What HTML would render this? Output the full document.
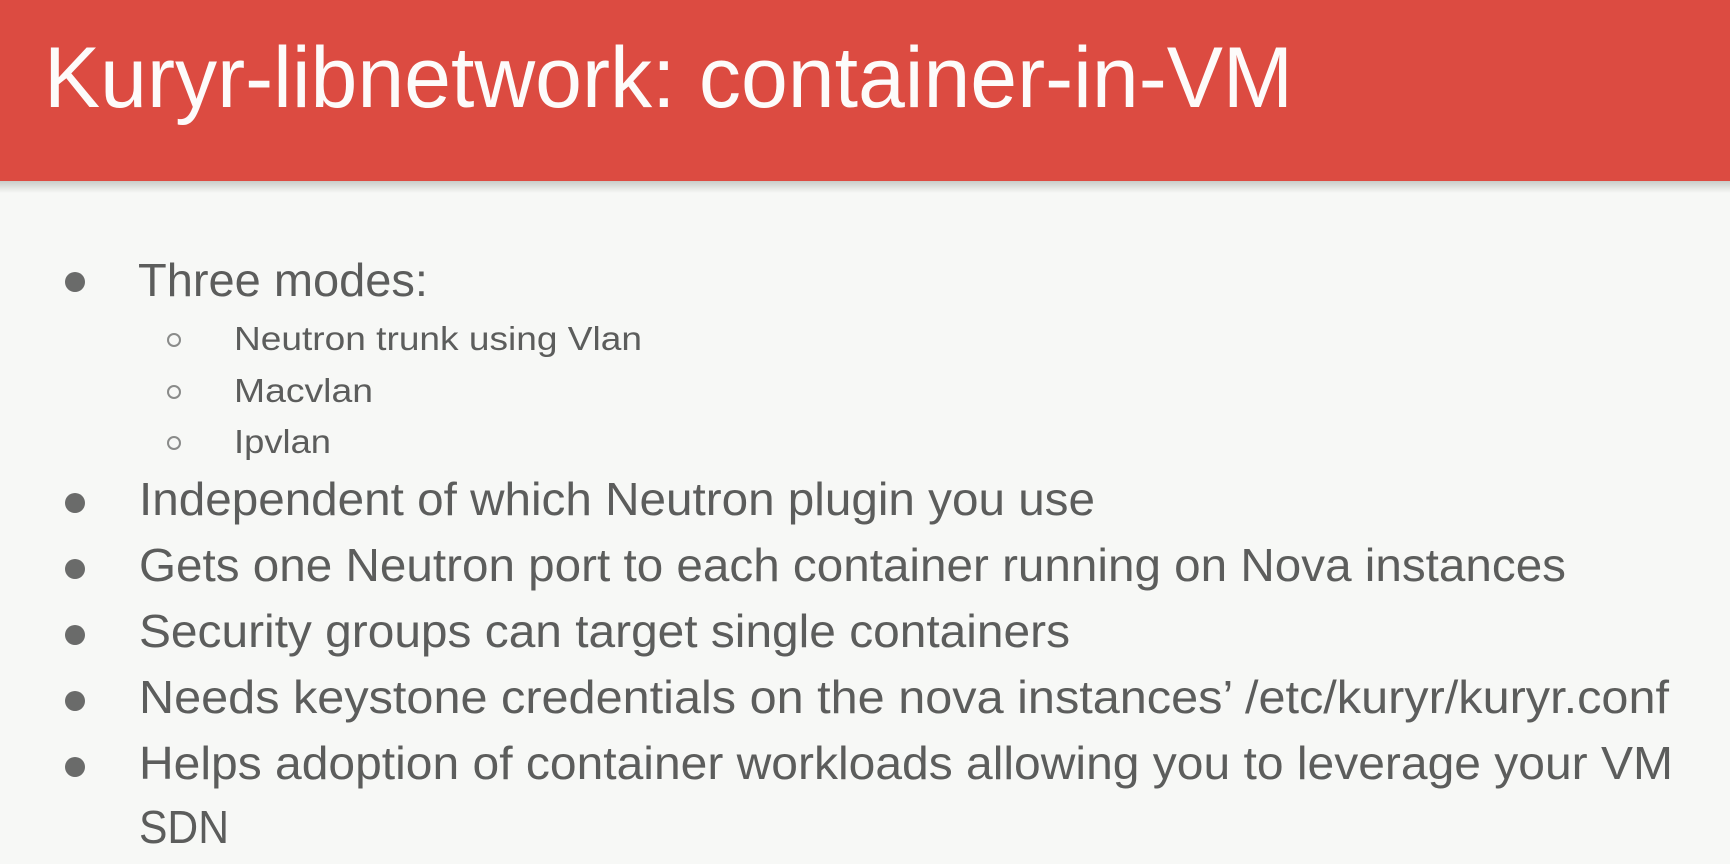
<!DOCTYPE html>
<html><head><meta charset="utf-8"><style>
html,body{margin:0;padding:0;width:1730px;height:864px;overflow:hidden;background:#f7f8f6}
svg{display:block}
</style></head><body>
<svg width="1730" height="864" viewBox="0 0 1730 864" xmlns="http://www.w3.org/2000/svg">
<defs><linearGradient id="sh" x1="0" y1="0" x2="0" y2="1"><stop offset="0" stop-color="#c9ccc8"/><stop offset="1" stop-color="#f7f8f6"/></linearGradient></defs>
<rect x="0" y="0" width="1730" height="864" fill="#f7f8f6"/>
<rect x="0" y="181" width="1730" height="12" fill="url(#sh)"/>
<rect x="0" y="0" width="1730" height="181" fill="#dc4b41"/>
<text x="44" y="107" font-family="Liberation Sans, sans-serif" font-size="86" fill="#fdfbfa" textLength="1249" lengthAdjust="spacingAndGlyphs">Kuryr-libnetwork: container-in-VM</text>
<g fill="#6a6b6a">
<circle cx="75" cy="282" r="10"/><circle cx="75" cy="503" r="10"/><circle cx="75" cy="569" r="10"/><circle cx="75" cy="635" r="10"/><circle cx="75" cy="701" r="10"/><circle cx="75" cy="767" r="10"/>
</g>
<g fill="none" stroke="#8a8b8a" stroke-width="2">
<circle cx="174" cy="340" r="6"/><circle cx="174" cy="392" r="6"/><circle cx="174" cy="443" r="6"/>
</g>
<g font-family="Liberation Sans, sans-serif" fill="#5c5d5c">
<text x="138" y="296" font-size="46" textLength="290" lengthAdjust="spacingAndGlyphs">Three modes:</text>
<text x="234" y="350" font-size="33" textLength="408" lengthAdjust="spacingAndGlyphs">Neutron trunk using Vlan</text>
<text x="234" y="402" font-size="33" textLength="139" lengthAdjust="spacingAndGlyphs">Macvlan</text>
<text x="234" y="453" font-size="33" textLength="97" lengthAdjust="spacingAndGlyphs">Ipvlan</text>
<text x="139" y="515" font-size="46" textLength="956" lengthAdjust="spacingAndGlyphs">Independent of which Neutron plugin you use</text>
<text x="139" y="581" font-size="46" textLength="1427" lengthAdjust="spacingAndGlyphs">Gets one Neutron port to each container running on Nova instances</text>
<text x="139" y="647" font-size="46" textLength="931" lengthAdjust="spacingAndGlyphs">Security groups can target single containers</text>
<text x="139" y="713" font-size="46" textLength="1530" lengthAdjust="spacingAndGlyphs">Needs keystone credentials on the nova instances’ /etc/kuryr/kuryr.conf</text>
<text x="139" y="779" font-size="46" textLength="1534" lengthAdjust="spacingAndGlyphs">Helps adoption of container workloads allowing you to leverage your VM</text>
<text x="139" y="843" font-size="46" textLength="90" lengthAdjust="spacingAndGlyphs">SDN</text>
</g>
</svg>
</body></html>
